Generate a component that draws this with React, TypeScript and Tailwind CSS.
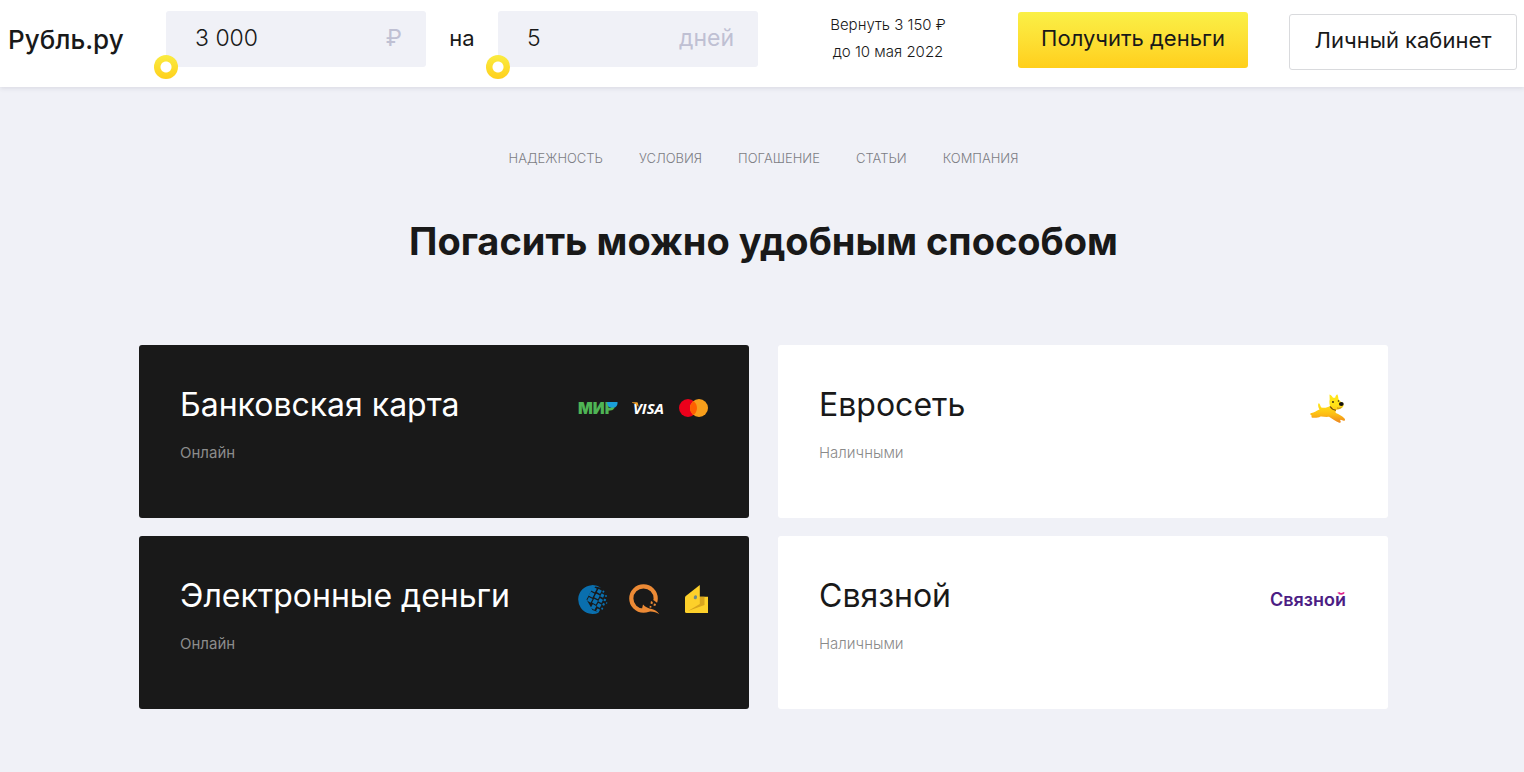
import { useState } from 'react';
import type { ReactNode } from 'react';

const BASE_DATE = new Date(2022, 4, 5);
const DAILY_RATE = 0.01;

const MENU = ['Надежность', 'Условия', 'Погашение', 'Статьи', 'Компания'];

const MONTHS = [
  'января', 'февраля', 'марта', 'апреля', 'мая', 'июня',
  'июля', 'августа', 'сентября', 'октября', 'ноября', 'декабря',
];

function formatMoney(n: number) {
  return String(Math.round(n)).replace(/\B(?=(\d{3})+$)/g, ' ');
}

function formatDate(d: Date) {
  return `${d.getDate()} ${MONTHS[d.getMonth()]} ${d.getFullYear()}`;
}

export default function App() {
  const [amount, setAmount] = useState(3000);
  const [days, setDays] = useState(5);

  const due = new Date(BASE_DATE);
  due.setDate(due.getDate() + days);

  return (
    <div className="min-h-screen bg-[#f0f1f7] font-['Inter','Noto_Sans',sans-serif] text-[#191919]">
      <header className="flex h-[87px] items-start bg-white pr-[7px] pl-2 shadow-[0_1px_5px_rgba(30,30,60,0.12)]">
        <a href="#" className="w-[158px] shrink-0 pt-6 text-[26px] leading-8 font-medium">
          Рубль.ру
        </a>
        <Field
          id="amount"
          label="Сумма"
          unit="₽"
          value={amount}
          text={formatMoney(amount)}
          min={3000}
          max={30000}
          step={1000}
          onChange={setAmount}
        />
        <label htmlFor="days" className="w-[72px] shrink-0 pt-[22px] text-center text-[22px] leading-8">
          на
        </label>
        <Field
          id="days"
          label="Срок"
          unit="дней"
          value={days}
          text={String(days)}
          min={5}
          max={30}
          step={1}
          onChange={setDays}
        />
        <div className="min-w-0 flex-1 pt-[11px] text-center text-[15px] leading-[27px] font-light">
          <p>Вернуть {formatMoney(amount * (1 + DAILY_RATE * days))} ₽</p>
          <p>до {formatDate(due)}</p>
        </div>
        <button className="mt-3 mr-[41px] h-14 w-[230px] shrink-0 rounded-[3px] bg-linear-to-b from-[#faf046] to-[#ffcf1a] pb-1 text-[22px]">
          Получить деньги
        </button>
        <button className="mt-[14px] h-14 w-[228px] shrink-0 rounded-[3px] border border-[#d9dadd] bg-white pb-1 text-[22px]">
          Личный кабинет
        </button>
      </header>

      <main className="mx-auto max-w-[1252px] pl-[3px]">
        <nav className="flex justify-center gap-9 pt-[61px] text-[13px] leading-5 font-light text-[#7c7d84] uppercase">
          {MENU.map((item) => (
            <a key={item} href="#">
              {item}
            </a>
          ))}
        </nav>

        <h1 className="pt-[49px] text-center text-[38px] leading-[48px] font-bold">
          Погасить можно удобным способом
        </h1>

        <section className="grid grid-cols-2 gap-x-[29px] gap-y-[18px] pt-[80px] pb-[63px]">
          <Card title="Банковская карта" note="Онлайн" dark>
            <MirLogo />
            <VisaLogo />
            <MastercardLogo />
          </Card>
          <Card title="Евросеть" note="Наличными">
            <DogLogo />
          </Card>
          <Card title="Электронные деньги" note="Онлайн" dark>
            <WebmoneyLogo />
            <QiwiLogo />
            <WalletLogo />
          </Card>
          <Card title="Связной" note="Наличными">
            <SvyaznoyLogo />
          </Card>
        </section>
      </main>
    </div>
  );
}

function Field({
  id,
  label,
  unit,
  value,
  text,
  min,
  max,
  step,
  onChange,
}: {
  id: string;
  label: string;
  unit: string;
  value: number;
  text: string;
  min: number;
  max: number;
  step: number;
  onChange: (n: number) => void;
}) {
  return (
    <div className="relative mt-[11px] min-w-0 flex-1">
      <div className="flex h-14 items-center rounded-[3px] bg-[#f0f1f7] pr-6 pb-[2px] pl-[29px] text-[23px]">
        <input
          id={id}
          aria-label={label}
          value={text}
          onChange={(e) => onChange(Number(e.target.value.replace(/\D/g, '')))}
          className="w-full min-w-0 bg-transparent font-light outline-none"
        />
        <span className="text-[#bfc0d3]">{unit}</span>
      </div>
      <input
        type="range"
        aria-label={label}
        min={min}
        max={max}
        step={step}
        value={value}
        onChange={(e) => onChange(Number(e.target.value))}
        className="absolute -right-3 -bottom-3 -left-3 h-6 appearance-none bg-transparent [&::-webkit-slider-thumb]:h-6 [&::-webkit-slider-thumb]:w-6 [&::-webkit-slider-thumb]:appearance-none [&::-webkit-slider-thumb]:rounded-full [&::-webkit-slider-thumb]:bg-[radial-gradient(circle,#fff_5px,transparent_6px),linear-gradient(#faec40,#ffd01c)]"
      />
    </div>
  );
}

function Card({
  title,
  note,
  dark,
  children,
}: {
  title: string;
  note: string;
  dark?: boolean;
  children: ReactNode;
}) {
  return (
    <article
      className={`flex h-[173px] items-start justify-between rounded-[3px] px-[41px] pt-[38px] ${
        dark ? 'bg-[#191919] text-white' : 'bg-white'
      }`}
    >
      <div>
        <h2 className="text-[32px] leading-[44px]">{title}</h2>
        <p className={`pt-4 text-[15px] leading-5 ${dark ? 'text-[#8c8c8c]' : 'font-light text-[#8a8a8a]'}`}>
          {note}
        </p>
      </div>
      <div className="flex h-[50px] shrink-0 items-center">{children}</div>
    </article>
  );
}

/* ───────────────────────── Logos ───────────────────────── */

function MirLogo() {
  return (
    <svg width="40" height="12" viewBox="0 0 40 12" className="mr-[14px] overflow-visible" aria-label="МИР">
      <text y="11.5" fontSize="15.5" fontWeight="900" fill="#4fb455">
        МИР
      </text>
      <path d="M29 0h10.500c.3 3-1.200 5.600-4 5.600h-3C30.500 5.600 29.300 3 29 0z" fill="#1a9fd8" />
    </svg>
  );
}

function VisaLogo() {
  return (
    <svg width="34" height="12" viewBox="0 0 34 12" className="mr-[13px] overflow-visible" aria-label="VISA">
      <text x="1" y="11.5" fontFamily="Open Sans" fontSize="15" fontWeight="700" fontStyle="italic" fill="#fff">
        VISA
      </text>
      <path d="M0 .3h4.600c.8 0 1.200.4 1.400 1.200l.9 4.300C5.600 3 3.300 1.300 0 .7z" fill="#f3a32b" />
    </svg>
  );
}

function MastercardLogo() {
  return (
    <svg width="29" height="18" viewBox="0 0 29 18">
      <circle cx="9" cy="9" r="9" fill="#eb001b" />
      <circle cx="20" cy="9" r="9" fill="#f79e1b" />
      <path d="M14.500 1.900a9 9 0 0 1 0 14.200a9 9 0 0 1 0-14.200z" fill="#ff5f00" />
    </svg>
  );
}

function DogLogo() {
  return (
    <svg width="37" height="32" viewBox="0 0 37 32">
      <defs>
        <linearGradient id="dog" x1="0" y1="2" x2="0" y2="31" gradientUnits="userSpaceOnUse">
          <stop offset="0.35" stopColor="#ffe417" />
          <stop offset="0.7" stopColor="#fdbd14" />
          <stop offset="1" stopColor="#ec8420" />
        </linearGradient>
      </defs>
      <path
        d="M9.500 17.500C8 15 7.600 12 8.700 11.200c1.200-.4 1.300 2.600 2.600 4.300c3 .8 6.200.2 8.700-1.500c-.7-2.300-.8-4.500-.3-6.500L19.500 2.500c1.500.3 2.700 1.800 3.500 3.300h2.200c.2-1.500.8-2.900 2-3.600c.8 1.300 1.200 3 1.200 4.800c1 1.600 2.400 2.700 4 3.600c1.600 1 1.300 3.500.3 4.700c-1.500 1.700-4 2.600-6.500 2.500c-.6 1.300-.8 2.400-.4 3.200c3.200 1.200 6 2.800 8.500 5.300c1.500 1.600.5 3-1.300 2.200l-2.200-.8l-.8.600c1.500 1.300.6 3.200-1.300 2.300c-3.700-1.600-6.500-4-9.700-5.800c-3.500.5-6-.5-8.500-.3c-2.300 1.500-5.700 1.300-7.500 1.200c-1.500 0-2-1-1-2.100C.2 23.200-.2 21.300 1.200 21c2.500.3 4.800-2.400 8.300-3.500z"
        fill="url(#dog)"
      />
      <path d="M20.200 14.500c1 2 2.500 3.300 5.800 3.700" fill="none" stroke="#6b4510" strokeWidth="1.100" />
      <circle cx="23" cy="10" r=".9" fill="#221b12" />
      <circle cx="28.500" cy="9" r=".8" fill="#221b12" />
      <ellipse cx="31.300" cy="12" rx="2.400" ry="1.900" fill="#15120e" />
      <path d="M27 16c2 .5 3.500.2 4.500-.8" fill="none" stroke="#9b5b18" strokeWidth=".7" />
    </svg>
  );
}

// centre x, centre y, side of every tile on the globe
const TILES = [
  [16, 4.6, 4.2], [21.3, 6.4, 3.8], [13.6, 9.6, 4.4], [19, 11.4, 4.2],
  [11.8, 14.8, 4.2], [17, 16.7, 4.4], [15.6, 22, 4.2], [21, 20.4, 3.8],
  [24.3, 10.6, 3.2], [22.6, 15.6, 3.6], [25.4, 6.6, 1.8], [28, 11, 1.800],
  [26.800, 15, 2.2], [25.6, 19.4, 2.2], [28.6, 18, 1.4], [20, 25.4, 3],
  [24.2, 23.6, 1.8],
];

function WebmoneyLogo() {
  return (
    <svg width="30" height="29" viewBox="0 0 30 29" className="mr-[21px]">
      <path d="M23 2.800A14.400 14.400 0 1 0 21 27.400L14.500 25L8.500 14.500L13.500 5.500L17.500 1.500z" fill="#0a6fae" />
      {TILES.map(([x, y, s]) => (
        <rect
          key={`${x}-${y}`}
          x={x - s / 2}
          y={y - s / 2}
          width={s}
          height={s}
          rx=".4"
          fill="#0a6fae"
          transform={`rotate(28 ${x} ${y})`}
        />
      ))}
    </svg>
  );
}

function QiwiLogo() {
  return (
    <svg width="31" height="31" viewBox="0 0 31 31" className="mr-[25px]">
      <circle cx="14.500" cy="14.500" r="12.200" fill="none" stroke="#ec8a35" strokeWidth="4.200" />
      <path d="M17 18.500l3.500-1 1.500-2.500 3 1.500 4 3-1.500 5.500-5 2-6-3z" fill="#191919" />
      <path d="M14 20.500c2.300 3 5.500 3.800 8.800 4.500c3 .7 5.500 2.300 7.500 5.300c-3-2-5.300-2.600-8.800-2.800c-3.300 0-6-1.300-8.500-2.800z" fill="#ec8a35" />
      <path d="M22 17l1.800 1-.4 2.200-1.900-.7zM25 19.500l2 .6-.7 2-1.900-.5zM20.800 21.800l1.700.5-.3 1.400-1.700-.3z" fill="#ec8a35" />
    </svg>
  );
}

function WalletLogo() {
  return (
    <svg width="23" height="28" viewBox="0 0 23 28">
      <path d="M14 11.700h9V28H1.500Q0 28 0 26.500V20z" fill="#fdd02a" />
      <path d="M14.800 11.700h4.700v8.300L3 26z" fill="#d9a51d" />
      <path d="M0 12.500Q0 11.700.8 11L14.800 0v19L3 26l-3 1z" fill="#fdd02a" />
      <ellipse cx="10.400" cy="12.300" rx="1.600" ry="2" fill="#6f8a86" transform="rotate(15 10.400 12.300)" />
    </svg>
  );
}

function SvyaznoyLogo() {
  return (
    <svg width="77" height="18" viewBox="0 0 77 18" className="overflow-visible" aria-label="Связной">
      <text y="16" fontSize="18" fontWeight="600" fill="#4c1d84">
        Связной
      </text>
      <path d="M67.500 1.500h7.500v3.400h-7.500z" fill="#fff" />
      <path d="M68.500 2.300c1 2 4.500 2 5.500 0" fill="none" stroke="#e0218a" strokeWidth="1.800" />
    </svg>
  );
}
